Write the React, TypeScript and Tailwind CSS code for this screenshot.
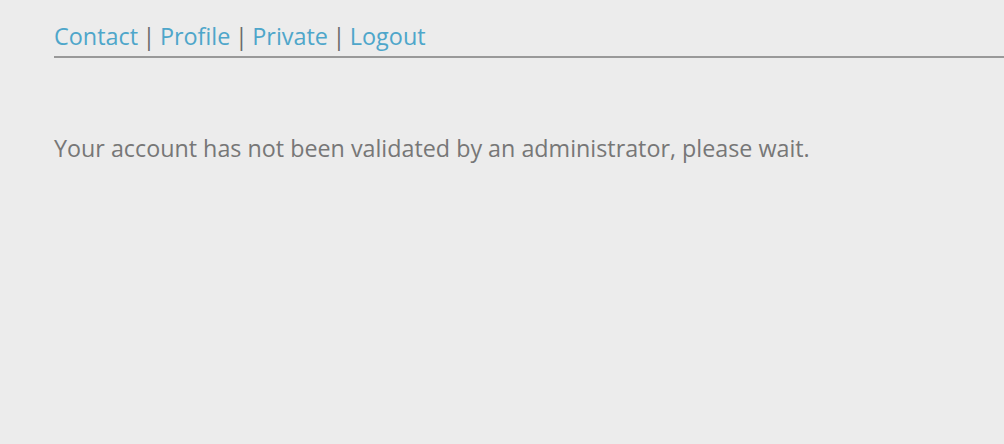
const links = ["Contact", "Profile", "Private", "Logout"];

export default function App() {
  return (
    <div className="min-h-screen bg-[#ececec] pl-[54px] pt-[21px] font-['Open_Sans',sans-serif]">
      <nav className="flex items-center border-b-2 border-[#999] pb-[5px] text-[23.4px] leading-[30px]">
        {links.map((link, i) => (
          <span key={link} className="flex items-center">
            {i > 0 && <span className="mx-[4.5px] text-[#6a6a6a]">|</span>}
            <a href="#" className="text-[#4ea6ca]">
              {link}
            </a>
          </span>
        ))}
      </nav>
      <p className="mt-[74px] text-[23.3px] leading-[32px] text-[#777]">
        Your account has not been validated by an administrator, please wait.
      </p>
    </div>
  );
}
